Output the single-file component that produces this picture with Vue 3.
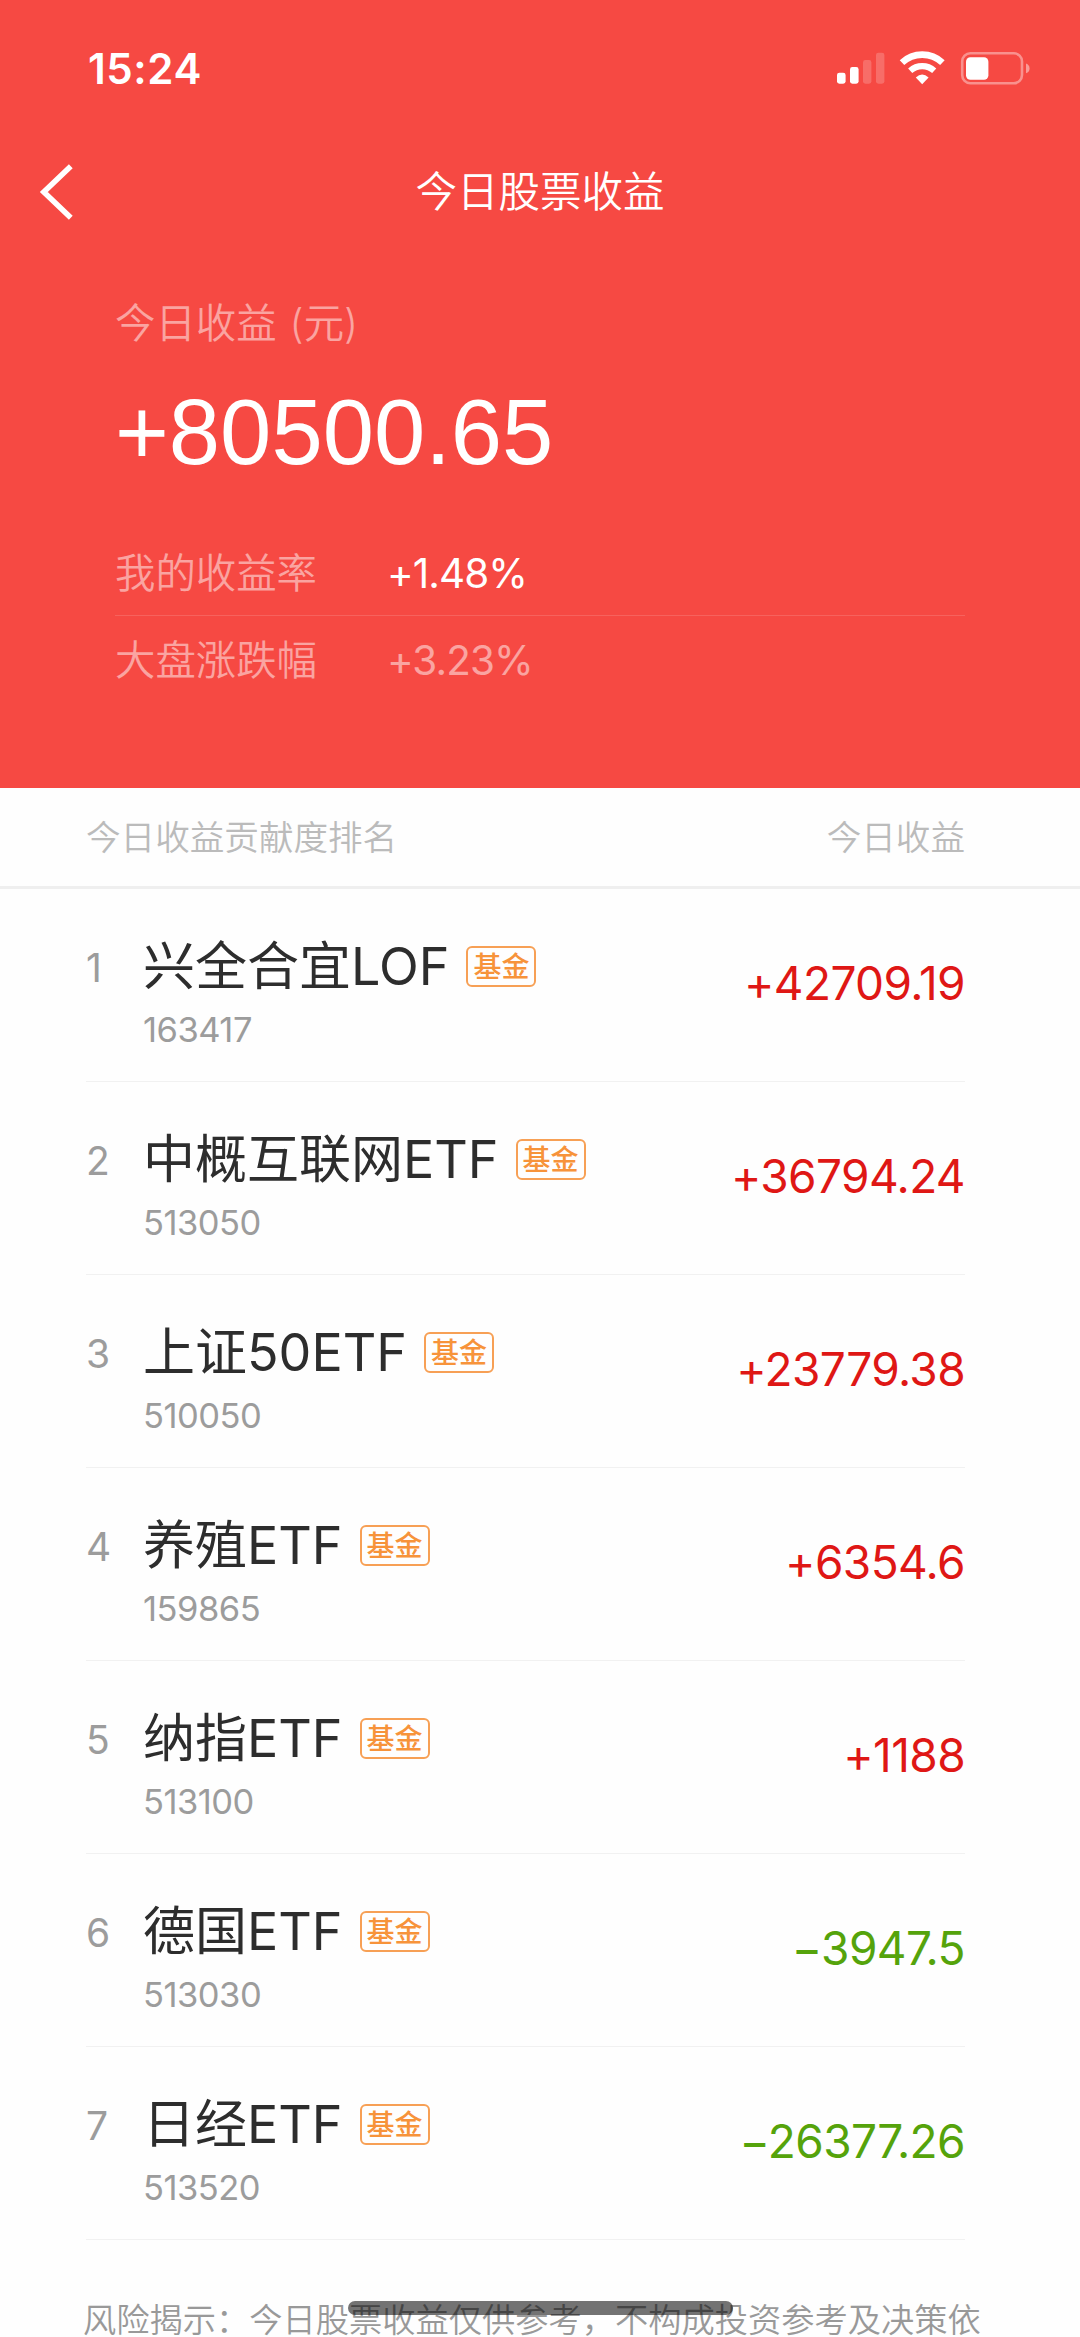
<script setup>
const rates = [
  { label: '我的收益率', value: '+1.48%', strong: true },
  { label: '大盘涨跌幅', value: '+3.23%', strong: false },
]

const holdings = [
  { name: '兴全合宜LOF', code: '163417', amount: '+42709.19' },
  { name: '中概互联网ETF', code: '513050', amount: '+36794.24' },
  { name: '上证50ETF', code: '510050', amount: '+23779.38' },
  { name: '养殖ETF', code: '159865', amount: '+6354.6' },
  { name: '纳指ETF', code: '513100', amount: '+1188' },
  { name: '德国ETF', code: '513030', amount: '−3947.5' },
  { name: '日经ETF', code: '513520', amount: '−26377.26' },
]
</script>

<template>
  <div class="screen">
    <header class="hero">
      <div class="status">
        <span class="clock">15:24</span>
        <svg class="status-icons" width="194" height="36" viewBox="0 0 194 36">
          <g fill="#fff">
            <rect x="1" y="22.7" width="8.6" height="11" rx="2.4" />
            <rect x="14" y="17" width="8.6" height="16.7" rx="2.4" />
            <rect x="27" y="10" width="8.4" height="23.7" rx="2.4" opacity=".2" />
            <rect x="40" y="2.7" width="8.4" height="31" rx="2.4" opacity=".2" />
          </g>
          <g fill="none" stroke="#fff">
            <path d="M66 12.6 A 29.5 29.5 0 0 1 106.4 12.6" stroke-width="6.6" />
            <path d="M74.2 20.8 A 18 18 0 0 1 98.2 20.8" stroke-width="6.2" />
          </g>
          <path d="M86.2 34.2 L79.8 27.6 Q86.2 21.6 92.6 27.6 Z" fill="#fff" />
          <rect x="126.2" y="3.3" width="59.8" height="30" rx="8.2" fill="none" stroke="#fff" stroke-width="2.6" opacity=".4" />
          <rect x="130" y="7.3" width="22.4" height="22.4" rx="4.4" fill="#fff" />
          <path d="M190 13.6 Q193.6 15 193.6 18.4 Q193.6 21.8 190 23.3 Z" fill="#fff" opacity=".45" />
        </svg>
      </div>

      <nav class="nav">
        <svg class="back" width="36" height="58" viewBox="0 0 36 58">
          <path d="M32.8 3.2 L5.8 29 L32.8 54.8" fill="none" stroke="#fff" stroke-width="5.5" />
        </svg>
        <h1 class="title">今日股票收益</h1>
      </nav>

      <section class="summary">
        <div class="summary-label">今日收益<span class="unit">(元)</span></div>
        <div class="total">+80500.65</div>
        <div v-for="rate in rates" :key="rate.label" class="rate" :class="{ strong: rate.strong }">
          <span class="rate-label">{{ rate.label }}</span>
          <span class="rate-value">{{ rate.value }}</span>
        </div>
      </section>
    </header>

    <div class="list-head">
      <span>今日收益贡献度排名</span>
      <span>今日收益</span>
    </div>

    <ol class="list">
      <li v-for="(item, index) in holdings" :key="item.code" class="row">
        <span class="rank">{{ index + 1 }}</span>
        <div class="fund">
          <div class="fund-name">
            <span>{{ item.name }}</span>
            <span class="tag">基金</span>
          </div>
          <div class="code">{{ item.code }}</div>
        </div>
        <span class="amount" :class="item.amount.startsWith('+') ? 'up' : 'down'">{{ item.amount }}</span>
      </li>
    </ol>

    <p class="notice">风险揭示：今日股票收益仅供参考，不构成投资参考及决策依</p>
    <div class="home-bar"></div>
  </div>
</template>

<style>
body {
  margin: 0;
  background: #fefefe;
}
</style>

<style scoped>
.screen {
  position: relative;
  width: 1080px;
  height: 2337px;
  overflow: hidden;
  background: #fefefe;
  font-family: Inter, "Noto Sans CJK SC", sans-serif;
  font-weight: 350;
  white-space: nowrap;
}

.hero {
  box-sizing: border-box;
  height: 788px;
  background: #f64943;
  color: #fff;
}

.status {
  display: flex;
  align-items: center;
  justify-content: space-between;
  height: 136px;
  padding: 0 50px 0 88px;
}

.clock {
  font-size: 42px;
  font-weight: 600;
  letter-spacing: 0.6px;
}

.status-icons {
  display: block;
}

.nav {
  display: flex;
  align-items: center;
  height: 112px;
  padding: 0 38px;
}

.back {
  flex: none;
}

.title {
  flex: 1;
  margin: 0 36px 0 0;
  text-align: center;
  line-height: 57px;
  font-size: 41.5px;
  font-weight: 350;
}

.summary {
  padding: 46px 115px 0;
}

.summary-label {
  height: 60px;
  line-height: 60px;
  font-size: 40.4px;
  color: rgba(255, 255, 255, 0.5);
}

.unit {
  margin-left: 13px;
}

.total {
  height: 110px;
  margin-top: 24px;
  line-height: 110px;
  font-family: "Liberation Sans", sans-serif;
  font-size: 92.2px;
  font-weight: 400;
}

.rate {
  display: flex;
  height: 89px;
  line-height: 89px;
  font-size: 40.4px;
  color: rgba(255, 255, 255, 0.5);
}

.total + .rate {
  box-sizing: border-box;
  height: 86px;
  margin-top: 42px;
  line-height: 87px;
  border-bottom: 1px solid rgba(255, 255, 255, 0.14);
}

.rate-label {
  width: 272px;
}

.rate-value {
  font-weight: 400;
  letter-spacing: -0.9px;
}

.strong .rate-value {
  color: #fff;
}

.list-head {
  box-sizing: border-box;
  display: flex;
  justify-content: space-between;
  height: 101px;
  padding: 0 115px 0 86px;
  border-bottom: 3px solid #efefef;
  line-height: 98px;
  font-size: 34.6px;
  color: #bbb;
}

.list {
  margin: 0 115px 0 86px;
  padding: 0;
  list-style: none;
}

.row {
  box-sizing: border-box;
  display: flex;
  height: 192.96px;
  border-bottom: 1px solid #f1f1f1;
}

.rank {
  width: 57px;
  line-height: 158px;
  font-size: 39px;
  font-weight: 400;
  color: #9c9c9c;
}

.fund {
  flex: 1;
  padding-top: 43px;
}

.fund-name {
  display: flex;
  align-items: center;
  height: 69px;
  line-height: 71px;
  font-size: 52px;
  font-weight: 400;
  color: #2d2d2d;
}

.tag {
  box-sizing: border-box;
  width: 70px;
  height: 41px;
  margin-left: 17px;
  border: 2px solid #f7a055;
  border-radius: 6px;
  text-align: center;
  line-height: 38px;
  font-size: 28px;
  font-weight: 500;
  color: #f7933a;
}

.code {
  height: 58px;
  line-height: 58px;
  font-size: 34.5px;
  font-weight: 400;
  letter-spacing: -0.5px;
  color: #9c9c9c;
}

.amount {
  line-height: 189px;
  font-size: 46px;
  font-weight: 400;
  letter-spacing: -0.6px;
}

.up {
  color: #df1715;
}

.down {
  color: #55a30b;
}

.notice {
  margin: 63px 0 0 83px;
  line-height: 34px;
  font-size: 33.25px;
  color: #999;
}

.home-bar {
  position: absolute;
  left: 348px;
  top: 2301px;
  width: 385px;
  height: 14px;
  border-radius: 7px;
  background: rgba(0, 0, 0, 0.55);
}
</style>
